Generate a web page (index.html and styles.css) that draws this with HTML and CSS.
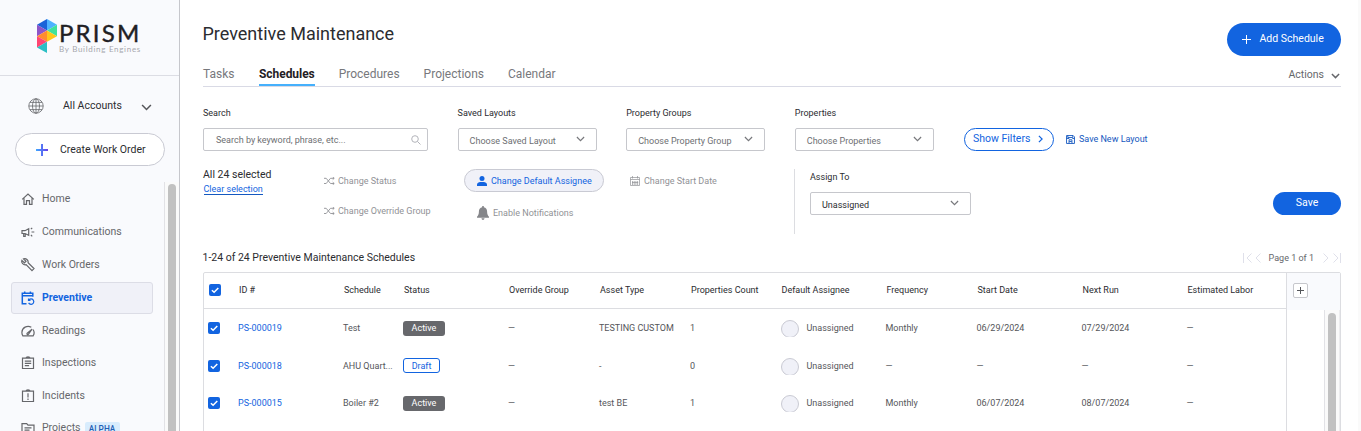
FILE: index.html
```html
<!DOCTYPE html>
<html lang="en">
<head>
    <meta charset="UTF-8">
    <meta name="viewport" content="width=device-width, initial-scale=1.0">
    <title>Preventive Maintenance</title>
    <link rel="stylesheet" href="styles.css">
</head>
<body>

    <!-- Shared icons -->
    <svg class="defs">
        <symbol id="chevron" viewBox="0 0 10 6"><path d="M1 .8l4 4 4-4"/></symbol>
        <symbol id="shuffle" viewBox="0 0 11 8"><path d="M0 1.300h2.200l4.300 5.200h3.600M0 6.500h2.200l4.300-5.200h3.600M8.700 0l1.500 1.300-1.500 1.300M8.700 5.200l1.500 1.300-1.500 1.300"/></symbol>
        <symbol id="check" viewBox="0 0 12 12"><path d="M2.900 6.200l2.200 2.100 4.200-4.400"/></symbol>
    </svg>

    <div class="app">
        <!-- Sidebar -->
        <aside class="sidebar">
            <div class="brand">
                <svg class="brand-mark" viewBox="0 0 20 34">
                    <path fill="#1a62d8" d="M10 0v11.500L0 5.800z"/>
                    <path fill="#4db2ff" d="M10 0l10 5.800L10 11.500z"/>
                    <path fill="#8d55c7" d="M0 5.800l10 5.700L0 17.200z"/>
                    <path fill="#3fe29b" d="M20 5.800v11.400L10 11.500z"/>
                    <path fill="#ff8c2e" d="M10 11.500v11.300L0 17.200z"/>
                    <path fill="#ffc61a" d="M10 11.500l10 5.700-10 5.600z"/>
                    <path fill="#ff4672" d="M0 17.200l10 5.600L0 28.400z"/>
                    <path fill="#2bbfc4" d="M10 22.800v11.200L0 28.400z"/>
                </svg>
                <div class="brand-text">
                    <div class="brand-name">PRISM</div>
                    <div class="brand-sub">By Building Engines</div>
                </div>
            </div>

            <div class="accounts">
                <svg class="globe" viewBox="0 0 16 16"><circle cx="8" cy="8" r="7.200"/><ellipse cx="8" cy="8" rx="3.500" ry="7.200"/><path d="M8 .8v14.400M.8 8h14.400M1.900 4.400h12.200M1.900 11.600h12.200"/></svg>
                <span>All Accounts</span>
                <svg class="accounts-arrow"><use href="#chevron"/></svg>
            </div>

            <button type="button" class="create-btn">
                <svg viewBox="0 0 12 12">
                    <defs><linearGradient id="plusFill"><stop offset="0" stop-color="#3fa9ff"/><stop offset="1" stop-color="#6a3de8"/></linearGradient></defs>
                    <path fill="url(#plusFill)" d="M5 0h2v5h5v2H7v5H5V7H0V5h5z"/>
                </svg>
                Create Work Order
            </button>

            <div class="nav-wrap">
                <nav class="nav">
                    <a class="nav-item"><svg viewBox="0 0 14 14"><path d="M1.200 7.400L7 2l5.800 5.400M3 6.200v6.200h2.500V8.600h3v3.800H11V6.200"/></svg>Home</a>
                    <a class="nav-item"><svg viewBox="0 0 14 14"><path d="M1 5.700h3l3.700-1.900v6.400L4 8.500H1zM2.700 8.700v2.800h1.500V8.700M10.500 7h2.800M9.900 4.200l1.300-1.400M9.900 9.900l1.300 1.400"/></svg>Communications</a>
                    <a class="nav-item"><svg viewBox="0 0 14 14"><path d="M.9 2.400l2.500 2.400L5 3.200 2.600.9c2.400-.9 5 1 4.500 3.800l5.900 5.900-2 2-5.900-5.900C2.300 7.300.100 4.800.9 2.400z"/></svg>Work Orders</a>
                    <a class="nav-item active"><svg viewBox="0 0 14 14"><path stroke-width="1.500" d="M5.500 12.700H1.300V2.200h10.500v3.600M1.300 4.700h10.500M3.700.4v2M9.400.4v2"/><path d="M7.500 7.400v2h2M7.700 9.200c.8-1.600 3.500-1.700 4.600-.1 1.300 2-.2 4.300-2.300 4.200-1.100 0-1.900-.5-2.400-1.400"/></svg>Preventive</a>
                    <a class="nav-item"><svg viewBox="0 0 14 14"><path d="M10.300 3.200C6.200.9.900 3.600.9 8.500c0 1.300.3 2.300.9 3.300h10.400c1.200-1.900 1.100-4.400-.2-6.300M6.200 9.300l4.800-4.200-3.600 5.300c-.8.700-2-.4-1.200-1.100z"/></svg>Readings</a>
                    <a class="nav-item"><svg viewBox="0 0 14 14"><path d="M1.500 2.200h11v10.300h-11zM4.900 2.200C5.200.5 8.800.5 9.100 2.200M3.800 5.100h6.400M3.800 7.400h6.400M3.800 9.700h4.300"/></svg>Inspections</a>
                    <a class="nav-item"><svg viewBox="0 0 14 14"><path d="M1.500 2.200h11v10.300h-11zM4.900 2.200C5.200.5 8.800.5 9.100 2.200M7 4.200v4.200M7 9.600V11"/></svg>Incidents</a>
                    <a class="nav-item projects"><svg viewBox="0 0 14 14"><path d="M1 2.600h4.700l1.300 1.500h6v8.300H1zM3.500 6.800h7M3.500 9.200h5"/></svg>Projects <span class="alpha">ALPHA</span></a>
                </nav>
                <div class="nav-scroll"><div class="thumb"></div></div>
            </div>
        </aside>

        <!-- Main content -->
        <main class="main">
            <header class="page-head">
                <h1>Preventive Maintenance</h1>
                <button type="button" class="add-btn"><svg viewBox="0 0 9 9"><path d="M4.500 0v9M0 4.500h9"/></svg>Add Schedule</button>
            </header>

            <div class="tabs">
                <a class="tab">Tasks</a>
                <a class="tab selected">Schedules</a>
                <a class="tab">Procedures</a>
                <a class="tab">Projections</a>
                <a class="tab">Calendar</a>
                <a class="actions">Actions <svg><use href="#chevron"/></svg></a>
            </div>

            <div class="filters">
                <div class="field search">
                    <label>Search</label>
                    <div class="box">Search by keyword, phrase, etc...<svg class="lens" viewBox="0 0 10 10"><circle cx="4" cy="4" r="3.300"/><path d="M6.500 6.500l3 3"/></svg></div>
                </div>
                <div class="field">
                    <label>Saved Layouts</label>
                    <div class="box select">Choose Saved Layout<svg class="arrow"><use href="#chevron"/></svg></div>
                </div>
                <div class="field">
                    <label>Property Groups</label>
                    <div class="box select">Choose Property Group<svg class="arrow"><use href="#chevron"/></svg></div>
                </div>
                <div class="field">
                    <label>Properties</label>
                    <div class="box select">Choose Properties<svg class="arrow"><use href="#chevron"/></svg></div>
                </div>
                <button type="button" class="show-btn">Show Filters <svg viewBox="0 0 6 10"><path d="M1 1l4 4-4 4"/></svg></button>
                <a class="save-layout"><svg viewBox="0 0 10 10"><path d="M.6.600h7.300l1.500 1.500v7.300H.6zM2 .6v2.200h5.500V.6M.6 3.900h3M7 3.900h2.400M3.400 9.200V5.300h3.200v3.900M3.600 7.200h2.800"/></svg>Save New Layout</a>
            </div>

            <div class="bulk">
                <div class="selected-info">
                    <div>All 24 selected</div>
                    <a>Clear selection</a>
                </div>
                <div class="status-col">
                    <a class="bulk-link"><svg class="shuffle"><use href="#shuffle"/></svg>Change Status</a>
                    <a class="bulk-link"><svg class="shuffle"><use href="#shuffle"/></svg>Change Override Group</a>
                </div>
                <div class="assignee-col">
                    <a class="bulk-pill"><svg viewBox="0 0 10 10"><circle cx="5" cy="2.500" r="2.500"/><path d="M0 10V8.300C.3 6.500 2 5.900 5 5.900s4.700.6 5 2.400V10z"/></svg>Change Default Assignee</a>
                    <a class="bulk-link notify"><svg class="bell" viewBox="0 0 12 14"><path d="M5.200 0h1.600v1.200c2.200.3 3.300 2 3.300 4.300 0 2.700.6 3.900 1.900 5.200v1H0v-1c1.300-1.300 1.900-2.500 1.900-5.200 0-2.300 1.100-4 3.300-4.300zM4.500 12.300h3c-.1 2.200-2.900 2.200-3 0z"/></svg>Enable Notifications</a>
                </div>
                <div class="date-col">
                    <a class="bulk-link"><svg class="cal" viewBox="0 0 10 10"><path d="M.5 1.500h9v8h-9zM.5 3.500h9M2.500 0v2.500M7.500 0v2.500M2.500 5v4M4.200 5v4M5.900 5v4M7.600 5v4M2 6.500h6.200"/></svg>Change Start Date</a>
                </div>
                <div class="assign">
                    <label>Assign To</label>
                    <div class="box select">Unassigned<svg class="arrow"><use href="#chevron"/></svg></div>
                </div>
                <button type="button" class="save-btn">Save</button>
            </div>

            <div class="list-head">
                <h2>1-24 of 24 Preventive Maintenance Schedules</h2>
                <div class="pager">
                    <svg viewBox="0 0 18 10"><path d="M.5 0v10M8.500.5L4 5l4.500 4.500M17.500.5L13 5l4.500 4.500"/></svg>
                    <span>Page 1 of 1</span>
                    <svg viewBox="0 0 18 10"><path d="M.5.500L5 5 .5 9.500M10.500.5L15 5l-4.500 4.500M17.500 0v10"/></svg>
                </div>
            </div>

            <div class="table">
                <div class="grid">
                    <div class="row head">
                        <div><svg class="checkbox"><use href="#check"/></svg></div>
                        <div>ID #</div><div>Schedule</div><div>Status</div><div>Override Group</div><div>Asset Type</div><div>Properties Count</div>
                        <div>Default Assignee</div><div>Frequency</div><div>Start Date</div><div>Next Run</div><div>Estimated Labor</div>
                    </div>
                    <div class="row">
                        <div><svg class="checkbox"><use href="#check"/></svg></div>
                        <div class="id">PS-000019</div><div>Test</div><div><span class="tag">Active</span></div><div>—</div><div>TESTING CUSTOM</div><div>1</div>
                        <div class="person"><i><b></b></i>Unassigned</div><div>Monthly</div><div>06/29/2024</div><div>07/29/2024</div><div>—</div>
                    </div>
                    <div class="row">
                        <div><svg class="checkbox"><use href="#check"/></svg></div>
                        <div class="id">PS-000018</div><div>AHU Quart...</div><div><span class="tag draft">Draft</span></div><div>—</div><div>-</div><div>0</div>
                        <div class="person"><i><b></b></i>Unassigned</div><div>—</div><div>—</div><div>—</div><div>—</div>
                    </div>
                    <div class="row">
                        <div><svg class="checkbox"><use href="#check"/></svg></div>
                        <div class="id">PS-000015</div><div>Boiler #2</div><div><span class="tag">Active</span></div><div>—</div><div>test BE</div><div>1</div>
                        <div class="person"><i><b></b></i>Unassigned</div><div>Monthly</div><div>06/07/2024</div><div>08/07/2024</div><div>—</div>
                    </div>
                </div>
                <div class="side">
                    <div class="side-head"><span class="add-col"><svg viewBox="0 0 7 7"><path d="M3.500 0v7M0 3.500h7"/></svg></span></div>
                    <div class="side-body">
                        <div class="side-cell"></div>
                        <div class="side-scroll"><div class="thumb"></div></div>
                    </div>
                </div>
            </div>
        </main>
        <div class="edge"></div>
    </div>

</body>
</html>
```
FILE: styles.css
```css
* {
    box-sizing: border-box;
}

body {
    margin: 0;
    height: 431px;
    overflow: hidden;
    font-family: Roboto, "Liberation Sans", sans-serif;
    font-size: 9px;
    color: #2b2c30;
    background: #fff;
}

svg {
    display: block;
    flex: none;
    fill: none;
    stroke: currentColor;
}

.defs {
    position: absolute;
    width: 0;
    height: 0;
}

button {
    font-family: inherit;
    display: flex;
    align-items: center;
    padding: 0;
}

.app {
    display: flex;
    height: 431px;
}

/* Sidebar */
.sidebar {
    width: 180px;
    flex: none;
    display: flex;
    flex-direction: column;
    background: #f9fafd;
    border-right: 1px solid #c6c7cc;
}

.brand {
    display: flex;
    height: 76px;
    flex: none;
    padding: 19px 0 0 37px;
    border-bottom: 1px solid #dcdde4;
}

.brand-mark {
    width: 20px;
    height: 34px;
    stroke: none;
}

.brand-text {
    padding: 1px 0 0 2px;
    font-family: Lato, sans-serif;
}

.brand-name {
    font-size: 24px;
    line-height: 25px;
    letter-spacing: 2.2px;
    color: #1f2024;
    -webkit-text-stroke: 0.4px #1f2024;
}

.brand-sub {
    font-size: 8px;
    line-height: 9px;
    letter-spacing: 0.7px;
    color: #a7a8ad;
    white-space: nowrap;
}

.accounts {
    display: flex;
    align-items: center;
    height: 20px;
    margin-top: 20px;
    padding-left: 28px;
    font-size: 10.5px;
}

.accounts span {
    width: 78px;
    margin-left: 19px;
    padding-top: 1px;
    line-height: 18px;
}

.globe {
    width: 16px;
    height: 16px;
    stroke: #66676b;
    stroke-width: 0.8;
}

.accounts-arrow {
    width: 11px;
    height: 7px;
    margin-top: 3px;
    stroke: #55565a;
    stroke-width: 1.4;
}

.create-btn {
    width: 150px;
    height: 33px;
    flex: none;
    margin: 18px 0 0 15px;
    padding: 0 0 0 20px;
    border: 1px solid #c9cad3;
    border-radius: 17px;
    background: #fff;
    font-size: 10.5px;
    color: #2b2c30;
}

.create-btn svg {
    width: 12px;
    height: 12px;
    margin: 1px 12px 0 0;
    stroke: none;
}

.nav-wrap {
    display: flex;
    height: 264px;
    overflow: hidden;
    margin-top: 16px;
}

.nav {
    width: 164px;
    flex: none;
    padding: 1px 11px 0;
}

.nav-item {
    display: flex;
    align-items: center;
    width: 142px;
    height: 32px;
    margin-bottom: 0.9px;
    padding: 0 0 1px 9px;
    border: 1px solid transparent;
    border-radius: 3px;
    font-size: 10.5px;
    color: #66676b;
}

.nav-item svg {
    width: 14px;
    height: 14px;
    margin: 1px 7px 0 0;
    stroke-width: 1.2;
}

.nav-item.active {
    background: #f0f1f8;
    border-color: #dcdde6;
    color: #1264e0;
    font-weight: bold;
}

.nav-item.projects {
    padding-bottom: 3px;
}

.alpha {
    margin: 2px 0 0 4px;
    width: 35px;
    height: 14px;
    line-height: 15px;
    border-radius: 2px;
    background: #d8ecfd;
    color: #1f5fb5;
    font-size: 8.3px;
    font-weight: 500;
    text-align: center;
}

.nav-scroll {
    width: 15px;
    margin-top: -1px;
    padding: 3px 0 0 3px;
    background: #fafafa;
    border-left: 1px solid #e2e2e6;
}

.thumb {
    width: 8px;
    height: 300px;
    border-radius: 4px;
    background: #c1c1c1;
}

/* Main content */
.main {
    width: 1138px;
    flex: none;
    margin-left: 23px;
}

.edge {
    flex: 1;
    margin-left: 17px;
    background: #fafafa;
}

.page-head {
    display: flex;
    justify-content: space-between;
    height: 56px;
    padding-top: 23px;
}

h1 {
    margin: 0 0 0 -0.5px;
    font-size: 18px;
    line-height: 22px;
    font-weight: normal;
}

.add-btn {
    width: 114px;
    height: 33px;
    padding: 0 0 2px 15px;
    border: none;
    border-radius: 17px;
    background: #1264e0;
    color: #fff;
    font-size: 10.5px;
}

.add-btn svg {
    width: 9px;
    height: 9px;
    margin: 1px 8.5px 0 0;
}

.tabs {
    display: flex;
    height: 31px;
    padding-top: 9px;
    border-bottom: 1px solid #d9dae5;
    font-size: 12px;
    line-height: 18px;
    color: #77787c;
}

.tab {
    margin-right: 24px;
    height: 21px;
}

.tab.selected {
    margin-right: 23.5px;
    padding: 0 0.5px;
    color: #1f2024;
    font-weight: bold;
    letter-spacing: -0.05px;
    border-bottom: 2px solid #45b0fc;
}

.actions {
    display: flex;
    align-items: center;
    height: 19px;
    margin-left: auto;
    padding-right: 1px;
    font-size: 10.5px;
    color: #66676b;
}

.actions svg {
    width: 9px;
    height: 6px;
    margin: 2px 0 0 7px;
    stroke-width: 1.6;
}

.filters {
    display: flex;
    align-items: flex-end;
    height: 64px;
    margin-bottom: 1px;
}

.field {
    width: 139px;
    margin-right: 29.6px;
}

.field.search {
    width: 225px;
}

label {
    display: block;
    line-height: 12px;
    margin-bottom: 9px;
}

.box {
    display: flex;
    align-items: center;
    height: 23px;
    padding: 1px 7px 0 12px;
    border: 1px solid #c6c7cc;
    border-radius: 2px;
    background: #fff;
    color: #6e6f73;
}

.select {
    padding: 3px 11px 0 11px;
}

.lens {
    width: 10px;
    height: 10px;
    margin: -1px -1px 0 auto;
    stroke: #b3b4ba;
}

.arrow {
    width: 9px;
    height: 6px;
    margin: -4px 0 0 auto;
    stroke: #77787c;
    stroke-width: 1.3;
}

.show-btn {
    width: 90px;
    height: 23px;
    margin-left: 0.6px;
    padding: 0 0 2px 8px;
    border: 1px solid #1264e0;
    border-radius: 12px;
    background: #fff;
    color: #1264e0;
    font-size: 10.5px;
}

.show-btn svg {
    width: 5px;
    height: 8px;
    margin: 1px 0 0 8px;
    stroke-width: 1.5;
}

.save-layout {
    display: flex;
    align-items: center;
    height: 23px;
    margin-left: 12px;
    padding-bottom: 1px;
    color: #1458c0;
}

.save-layout svg {
    width: 9px;
    height: 9px;
    margin: 1px 4px 0 0;
}

/* Bulk edit */
.bulk {
    display: flex;
    height: 82px;
    padding-top: 17px;
}

.selected-info {
    width: 121px;
    margin-top: -1px;
    font-size: 10.5px;
    line-height: 14px;
}

.selected-info a {
    display: inline-block;
    font-size: 9px;
    line-height: 10px;
    margin: 2px 0 0 0.5px;
    border-bottom: 1px solid #1458c0;
    color: #1264e0;
}

.bulk-link {
    display: flex;
    align-items: center;
    height: 24px;
    margin-bottom: 6px;
    color: #919296;
}

.status-col {
    width: 140px;
}

.assignee-col {
    width: 163px;
}

.date-col {
    width: 167px;
}

.shuffle {
    width: 11px;
    height: 8px;
    margin-right: 3px;
    stroke-width: 0.9;
}

.bulk-pill {
    display: flex;
    align-items: center;
    width: 140px;
    height: 23px;
    margin-bottom: 11px;
    padding: 0 0 0 12px;
    border: 1px solid #c9cad3;
    border-radius: 12px;
    background: #f0f1f8;
    color: #1264e0;
}

.bulk-pill svg {
    width: 10px;
    height: 10px;
    margin-right: 4px;
    fill: #1264e0;
    stroke: none;
}

.notify {
    height: 20px;
    padding-left: 13px;
}

.bell {
    width: 12px;
    height: 14px;
    margin-right: 4px;
    fill: #85868a;
    stroke: none;
}

.cal {
    width: 10px;
    height: 10px;
    margin: 0 4px 0 3px;
    stroke-width: 0.7;
}

.assign {
    width: 177px;
    height: 65px;
    padding: 2px 0 0 15px;
    border-left: 1px solid #dcdde1;
}

.assign .box {
    color: #2b2c30;
}

.save-btn {
    width: 68px;
    height: 23px;
    margin: 23px 0 0 auto;
    padding-bottom: 2px;
    justify-content: center;
    border: none;
    border-radius: 12px;
    background: #1264e0;
    color: #fff;
    font-size: 10.5px;
}

.list-head {
    display: flex;
    justify-content: space-between;
    height: 38px;
    padding-top: 17px;
}

h2 {
    margin: 0 0 0 -0.5px;
    font-size: 10.5px;
    line-height: 14px;
    font-weight: normal;
}

.pager {
    display: flex;
    align-items: center;
    height: 13px;
    color: #66676b;
}

.pager svg {
    width: 18px;
    height: 10px;
    stroke: #dfe0ea;
}

.pager span {
    margin: 0 9px 0 8px;
}

/* Table */
.table {
    display: flex;
    height: 175px;
    border: 1px solid #dcdde1;
    border-radius: 2px 2px 0 0;
}

.grid {
    width: 1082px;
}

.row {
    display: grid;
    grid-template-columns: 30px 105px 60px 105px 91px 91px 90.5px 105px 91px 105px 105px 99px;
    align-items: center;
    height: 37.5px;
    color: #55565a;
    white-space: nowrap;
    padding-left: 4px;
}

.row.head {
    height: 36px;
    padding: 0 0 1px 5px;
    border-bottom: 1px solid #dcdde1;
    color: #2b2c30;
}

.row.head + .row {
    margin-top: 0.5px;
}

.checkbox {
    width: 12px;
    height: 12px;
    border-radius: 2px;
    background: #1264e0;
    stroke: #fff;
    stroke-width: 1.5;
}

.id {
    color: #1264e0;
}

.tag {
    display: block;
    width: 42px;
    height: 15px;
    line-height: 15px;
    border-radius: 3px;
    background: #67686c;
    color: #fff;
    text-align: center;
}

.tag.draft {
    width: 37px;
    line-height: 14px;
    border: 1px solid #1264e0;
    background: #fff;
    color: #1264e0;
}

.person {
    display: flex;
    align-items: center;
}

/* the avatar is cut off slightly at the bottom */
.person i {
    width: 18px;
    height: 17px;
    margin: 1px 8px 0 0;
    overflow: hidden;
}

.person b {
    display: block;
    width: 18px;
    height: 18px;
    border: 1px solid #c9cad3;
    border-radius: 50%;
    background: #f0f1f8;
}

.side {
    width: 54px;
    background: #fff;
    border-left: 1px solid #dcdde1;
}

.side-head {
    height: 37px;
    padding: 10px 0 0 6px;
    background: #f9fafd;
}

.add-col {
    display: flex;
    align-items: center;
    justify-content: center;
    width: 15px;
    height: 15px;
    border: 1px solid #c6c7cc;
    border-radius: 2px;
    background: #fff;
}

.add-col svg {
    width: 7px;
    height: 7px;
    stroke: #55565a;
}

.side-body {
    display: flex;
    height: 137px;
    overflow: hidden;
}

.side-cell {
    width: 39px;
    margin-top: -1px;
    border-top: 1px solid #dcdde1;
    border-right: 1px solid #e2e2e6;
}

.side-scroll {
    width: 15px;
    padding: 3px 0 0 3px;
    background: #fafafa;
    border-right: 1px solid #ececee;
}
```
